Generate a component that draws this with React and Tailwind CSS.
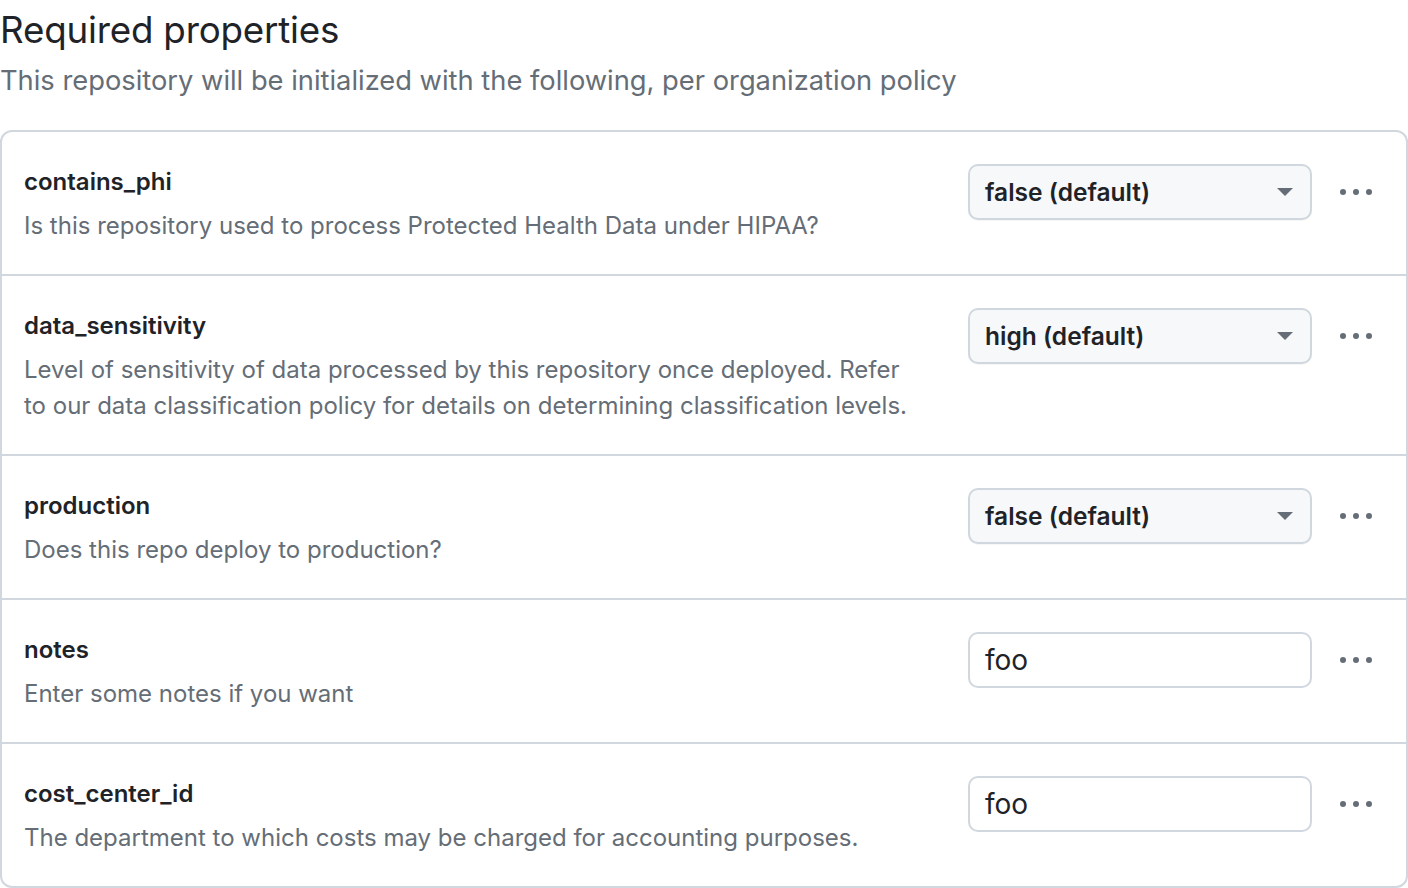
const rows = [
  {
    name: "contains_phi",
    description: "Is this repository used to process Protected Health Data under HIPAA?",
    kind: "select",
    value: "false (default)",
  },
  {
    name: "data_sensitivity",
    description:
      "Level of sensitivity of data processed by this repository once deployed. Refer to our data classification policy for details on determining classification levels.",
    kind: "select",
    value: "high (default)",
  },
  {
    name: "production",
    description: "Does this repo deploy to production?",
    kind: "select",
    value: "false (default)",
  },
  {
    name: "notes",
    description: "Enter some notes if you want",
    kind: "input",
    value: "foo",
  },
  {
    name: "cost_center_id",
    description: "The department to which costs may be charged for accounting purposes.",
    kind: "input",
    value: "foo",
  },
];

function Dots() {
  return (
    <button type="button" className="flex h-14 w-16 items-center justify-center gap-[7px]">
      <span className="h-[6px] w-[6px] rounded-full bg-[#656d76]" />
      <span className="h-[6px] w-[6px] rounded-full bg-[#656d76]" />
      <span className="h-[6px] w-[6px] rounded-full bg-[#656d76]" />
    </button>
  );
}

export default function App() {
  return (
    <div className="w-[1408px] h-[888px] bg-white font-['Inter',sans-serif] text-[#1f2328]">
      <h1 className="text-[36.75px] leading-[44px] pt-[8px] tracking-[-0.2px]">Required properties</h1>
      <p className="text-[27.3px] leading-[36px] text-[#656d76] mt-[11px]">
        This repository will be initialized with the following, per organization policy
      </p>

      <div className="mt-[31px] rounded-[12px] border-2 border-[#d0d7de] overflow-hidden">
        {rows.map((row, i) => (
          <div
            key={row.name}
            className={`flex items-start justify-between pl-[22px] pr-[18px] pt-[32px] pb-[30px] ${
              i > 0 ? "border-t-2 border-[#d0d7de]" : ""
            }`}
          >
            <div className="w-[890px]">
              <div className="text-[24px] leading-[36px] font-semibold">{row.name}</div>
              <div className="text-[24px] leading-[36px] text-[#656d76] mt-[8px]">
                {row.description}
              </div>
            </div>
            <div className="flex items-center gap-[12px]">
              {row.kind === "select" ? (
                <div className="flex h-[56px] w-[344px] items-center justify-between rounded-[10px] border-2 border-[#d0d7de] bg-[#f6f8fa] pl-[15px] pr-[16px] shadow-[0_1px_0_rgba(31,35,40,0.04)]">
                  <span className="text-[24.5px] font-semibold">{row.value}</span>
                  <svg width="18" height="10" viewBox="0 0 18 10">
                    <path d="M1 1 L17 1 L9 9 Z" fill="#656d76" />
                  </svg>
                </div>
              ) : (
                <div className="flex h-[56px] w-[344px] items-center rounded-[10px] border-2 border-[#d0d7de] bg-white pl-[15px]">
                  <span className="text-[28px]">{row.value}</span>
                </div>
              )}
              <Dots />
            </div>
          </div>
        ))}
      </div>
    </div>
  );
}
